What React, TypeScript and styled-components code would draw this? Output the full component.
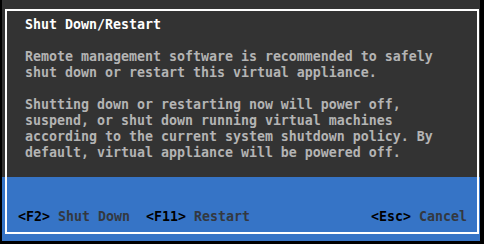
import React from 'react'
import styled, { createGlobalStyle } from 'styled-components'

const GlobalStyle = createGlobalStyle`
   html, body {
      margin: 0;
      padding: 0;
      background: #000;
      width: 484px;
      height: 244px;
      overflow: hidden;
   }
`

const Screen = styled.div`
   box-sizing: border-box;
   width: 478px;
   height: 241px;
   margin-left: 2px;
   padding: 9px 1px 7px 3px;
   background: linear-gradient(to bottom, #333333 0, #333333 177px, #3674c6 177px, #3674c6 100%);
   font-family: 'DejaVu Sans Mono', 'Liberation Mono', monospace;
   font-size: 13.29px;
   font-weight: bold;
   line-height: 16px;
`

const Frame = styled.div`
   box-sizing: border-box;
   height: 100%;
   border: 2px solid #ffffff;
   display: flex;
   flex-direction: column;
   justify-content: space-between;
`

const Body = styled.div`
   padding: 6px 0 0 18px;
`

const Title = styled.div`
   color: #ffffff;
   white-space: pre;
`

const Paragraph = styled.div`
   margin-top: 16px;
   color: #b4b4b4;
`

const Line = styled.div`
   white-space: pre;
`

const Footer = styled.div`
   display: flex;
   justify-content: space-between;
   padding: 0 10px 7px 11px;
   white-space: pre;
`

const Group = styled.div`
   display: flex;
   gap: 16px;
`

const Action = styled.span`
   display: flex;
   gap: 8px;
`

const Key = styled.span`
   color: #000000;
`

const Label = styled.span`
   color: #333840;
`

type ActionProps = { keyName: string; label: string }

const FooterAction = ({ keyName, label }: ActionProps) => (
   <Action>
      <Key>{`<${keyName}>`}</Key>
      <Label>{label}</Label>
   </Action>
)

export default function App() {
   return (
      <>
         <GlobalStyle />
         <Screen>
            <Frame>
               <Body>
                  <Title>Shut Down/Restart</Title>
                  <Paragraph>
                     <Line>Remote management software is recommended to safely</Line>
                     <Line>shut down or restart this virtual appliance.</Line>
                  </Paragraph>
                  <Paragraph>
                     <Line>Shutting down or restarting now will power off,</Line>
                     <Line>suspend, or shut down running virtual machines</Line>
                     <Line>according to the current system shutdown policy. By</Line>
                     <Line>default, virtual appliance will be powered off.</Line>
                  </Paragraph>
               </Body>
               <Footer>
                  <Group>
                     <FooterAction keyName="F2" label="Shut Down" />
                     <FooterAction keyName="F11" label="Restart" />
                  </Group>
                  <FooterAction keyName="Esc" label="Cancel" />
               </Footer>
            </Frame>
         </Screen>
      </>
   )
}
